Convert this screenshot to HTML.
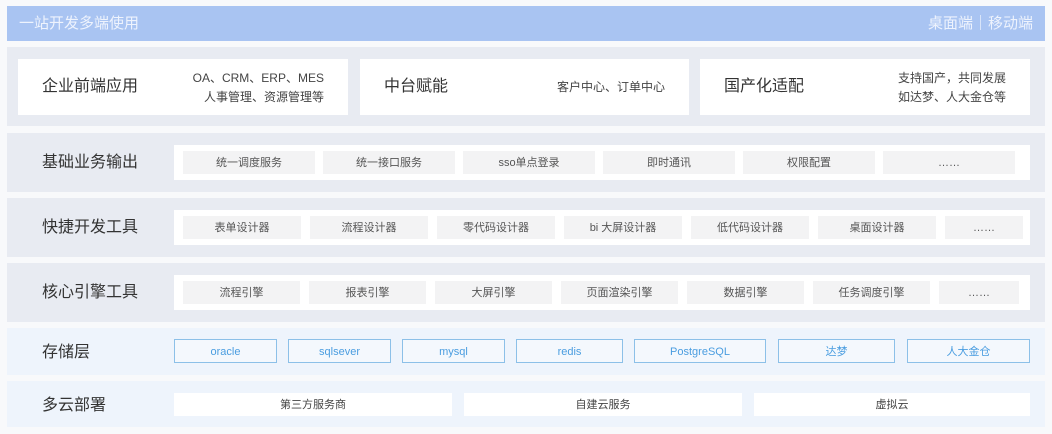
<!DOCTYPE html>
<html><head><meta charset="utf-8"><style>
*{margin:0;padding:0;box-sizing:border-box}
body{width:1052px;height:434px;background:#f8f9fb;font-family:"Liberation Sans","Noto Sans CJK SC",sans-serif;position:relative;overflow:hidden;color:#333}
.a{position:absolute}
.hdr{left:7px;top:6px;width:1038px;height:35px;background:#a9c4f2;color:#eef3fd;font-size:15px;line-height:35px;padding:0 12px}
.hdr span{float:right}
.row{left:7px;width:1038px;background:#e8ebf2}
.lbl{position:absolute;left:35px;top:0;font-size:16px;color:#333}
.card{background:#fff;top:59px;height:56px}
.card .t{position:absolute;left:24px;top:0;line-height:56px;font-size:16px}
.card .s{position:absolute;right:24px;top:10px;font-size:12px;line-height:19px;text-align:right;color:#444}
.inner{background:#fff;left:174px;width:856px;height:35px;display:flex;align-items:center;padding-left:9px;gap:8px}
.chip{background:#f3f3f4;height:23px;line-height:24px;text-align:center;font-size:11px;color:#555}
.st{position:absolute;top:339px;height:24px;border:1px solid #8cc0e8;color:#4a9de0;font-size:11px;text-align:center;line-height:24px;background:#f4f8fd}
.cl{position:absolute;top:393px;height:23px;background:#fff;font-size:11px;text-align:center;line-height:25px;color:#444}
</style></head><body>
<div class="a hdr">一站开发多端使用<span>桌面端｜移动端</span></div>

<div class="a row" style="top:47px;height:79px"></div>
<div class="a card" style="left:18px;width:330px"><div class="t">企业前端应用</div><div class="s">OA、CRM、ERP、MES<br>人事管理、资源管理等</div></div>
<div class="a card" style="left:360px;width:329px"><div class="t">中台赋能</div><div class="s" style="top:19px">客户中心、订单中心</div></div>
<div class="a card" style="left:700px;width:330px"><div class="t">国产化适配</div><div class="s">支持国产，共同发展<br>如达梦、人大金仓等</div></div>

<div class="a row" style="top:133px;height:59px"><div class="lbl" style="line-height:59px">基础业务输出</div></div>
<div class="a inner" style="top:145px">
<div class="chip" style="width:132px">统一调度服务</div><div class="chip" style="width:132px">统一接口服务</div><div class="chip" style="width:132px">sso单点登录</div><div class="chip" style="width:132px">即时通讯</div><div class="chip" style="width:132px">权限配置</div><div class="chip" style="width:132px">……</div></div>

<div class="a row" style="top:198px;height:59px"><div class="lbl" style="line-height:59px">快捷开发工具</div></div>
<div class="a inner" style="top:210px;gap:9px">
<div class="chip" style="width:118px">表单设计器</div><div class="chip" style="width:118px">流程设计器</div><div class="chip" style="width:118px">零代码设计器</div><div class="chip" style="width:118px">bi 大屏设计器</div><div class="chip" style="width:118px">低代码设计器</div><div class="chip" style="width:118px">桌面设计器</div><div class="chip" style="width:78px">……</div></div>

<div class="a row" style="top:263px;height:59px"><div class="lbl" style="line-height:59px">核心引擎工具</div></div>
<div class="a inner" style="top:275px;gap:9px">
<div class="chip" style="width:117px">流程引擎</div><div class="chip" style="width:117px">报表引擎</div><div class="chip" style="width:117px">大屏引擎</div><div class="chip" style="width:117px">页面渲染引擎</div><div class="chip" style="width:117px">数据引擎</div><div class="chip" style="width:117px">任务调度引擎</div><div class="chip" style="width:80px">……</div></div>

<div class="a row" style="top:328px;height:47px;background:#eef4fc"><div class="lbl" style="line-height:49px">存储层</div></div>
<div class="st" style="left:174px;width:103px">oracle</div>
<div class="st" style="left:288px;width:103px">sqlsever</div>
<div class="st" style="left:402px;width:103px">mysql</div>
<div class="st" style="left:516px;width:107px">redis</div>
<div class="st" style="left:634px;width:132px">PostgreSQL</div>
<div class="st" style="left:778px;width:117px">达梦</div>
<div class="st" style="left:907px;width:123px">人大金仓</div>

<div class="a row" style="top:381px;height:46px;background:#eef4fc"><div class="lbl" style="line-height:50px">多云部署</div></div>
<div class="cl" style="left:174px;width:278px">第三方服务商</div>
<div class="cl" style="left:464px;width:278px">自建云服务</div>
<div class="cl" style="left:754px;width:276px">虚拟云</div>
</body></html>
